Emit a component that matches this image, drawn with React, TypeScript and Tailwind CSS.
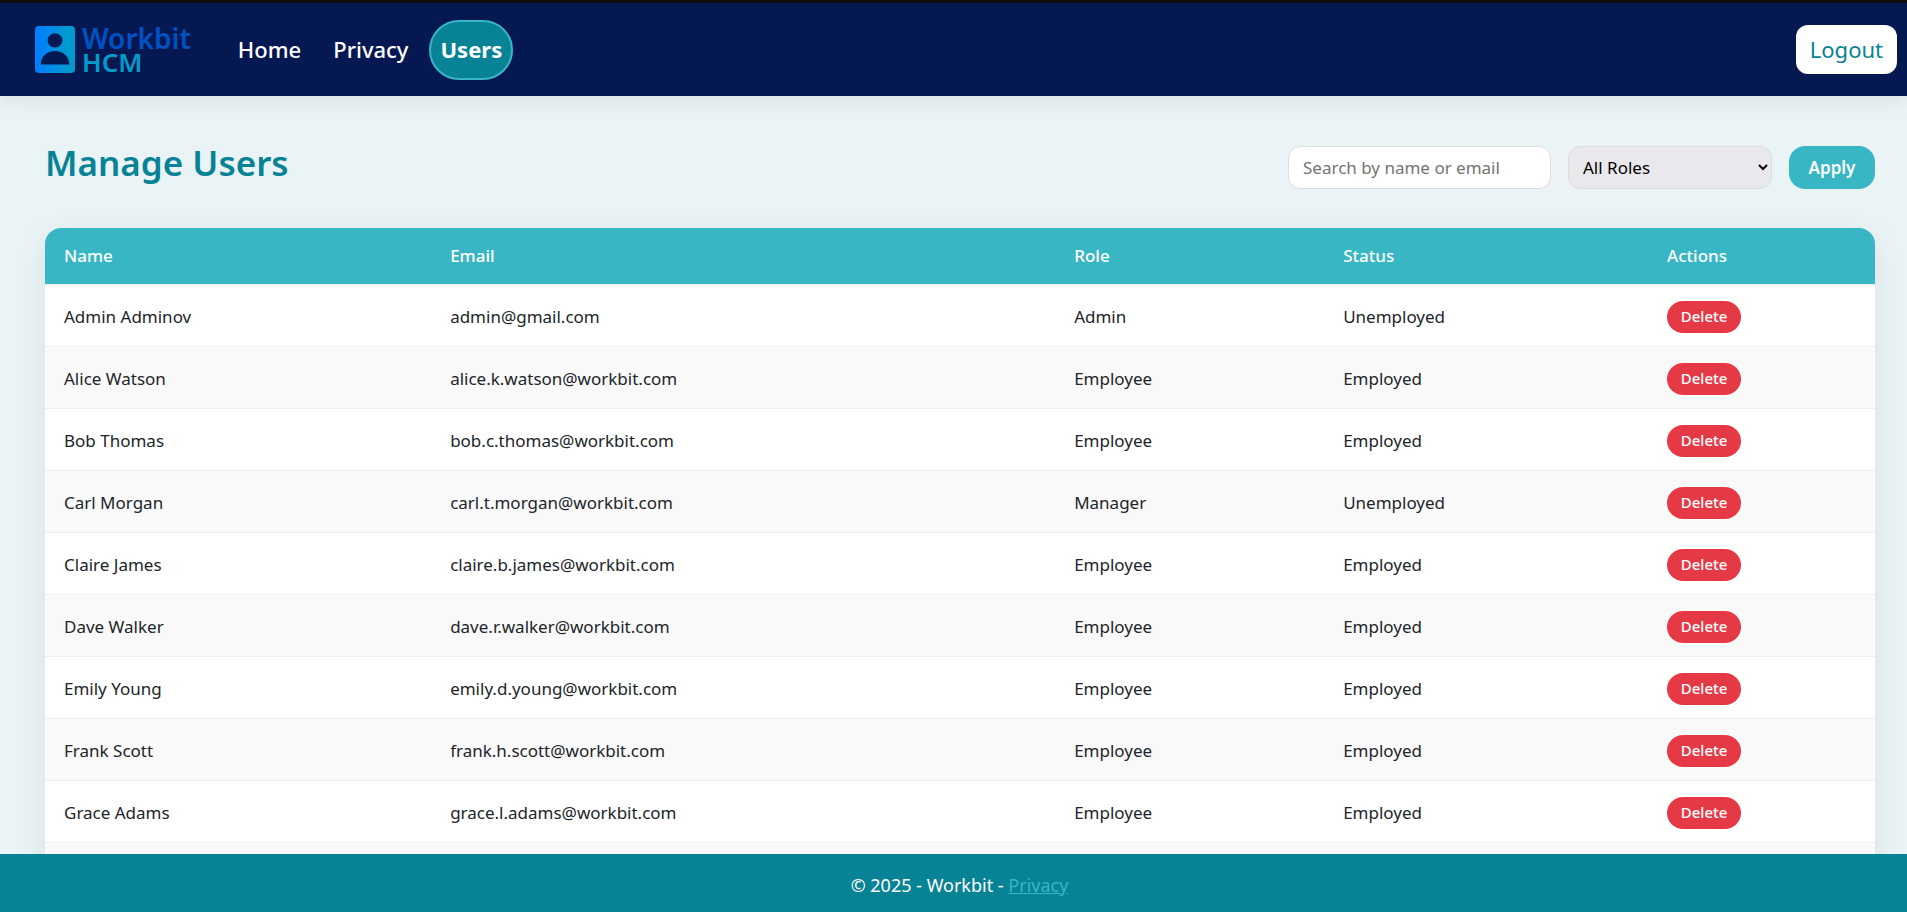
const users = [
  ['Admin Adminov', 'admin@gmail.com', 'Admin', 'Unemployed'],
  ['Alice Watson', 'alice.k.watson@workbit.com', 'Employee', 'Employed'],
  ['Bob Thomas', 'bob.c.thomas@workbit.com', 'Employee', 'Employed'],
  ['Carl Morgan', 'carl.t.morgan@workbit.com', 'Manager', 'Unemployed'],
  ['Claire James', 'claire.b.james@workbit.com', 'Employee', 'Employed'],
  ['Dave Walker', 'dave.r.walker@workbit.com', 'Employee', 'Employed'],
  ['Emily Young', 'emily.d.young@workbit.com', 'Employee', 'Employed'],
  ['Frank Scott', 'frank.h.scott@workbit.com', 'Employee', 'Employed'],
  ['Grace Adams', 'grace.l.adams@workbit.com', 'Employee', 'Employed'],
];

const columns = [
  { label: 'Name', width: 'w-[21.1%]' },
  { label: 'Email', width: 'w-[34.1%]' },
  { label: 'Role', width: 'w-[14.7%]' },
  { label: 'Status', width: 'w-[17.7%]' },
  { label: 'Actions', width: 'w-[12.4%]' },
];

function Logo() {
  return (
    <a href="#" aria-label="Workbit HCM" className="flex items-center gap-[7px]">
      <svg width="40" height="47" viewBox="0 0 38 47" preserveAspectRatio="none" aria-hidden="true">
        <defs>
          <linearGradient id="badge" x1="0" y1="0" x2="1" y2="0">
            <stop offset="0.1" stopColor="#0080fb" />
            <stop offset="0.8" stopColor="#0099d0" />
          </linearGradient>
        </defs>
        <path
          fill="url(#badge)"
          fillRule="evenodd"
          d="M4 0h30a4 4 0 0 1 4 4v39a4 4 0 0 1-4 4H4a4 4 0 0 1-4-4V4a4 4 0 0 1 4-4ZM19 7.200a7 7.200 0 1 0 0 14.400a7 7.200 0 1 0 0-14.400ZM5.500 38.500h27.200C32.700 31 27 25 19 25S5.500 31 5.500 38.500Z"
        />
      </svg>
      <span className="flex flex-col text-[28px] leading-6 font-semibold">
        <span className="text-[#0052c2]">Workbit</span>
        <span className="text-[26px] text-[#009dcc]">HCM</span>
      </span>
    </a>
  );
}

export default function App() {
  return (
    <div className="flex h-screen flex-col overflow-hidden bg-[#eaf4f7] font-['Noto_Sans','Open_Sans',sans-serif] text-[17px] text-[#212529]">
      <header className="relative flex h-24 shrink-0 items-center border-t-3 border-[#0d0d0d] bg-[#061852] pr-2.5 pl-[35px] shadow-[0_4px_20px_rgba(0,0,0,0.08)]">
        <Logo />
        <nav className="ml-9 flex items-center gap-2.5 text-[22px] font-medium text-white">
          <a href="#" className="px-[11px]">Home</a>
          <a href="#" className="px-[11px]">Privacy</a>
          <a href="#" className="flex h-[60px] items-center rounded-[30px] border-2 border-[#38b6c4] bg-[#088395] px-[9px] font-bold">
            Users
          </a>
        </nav>
        <button className="ml-auto h-[49px] rounded-xl bg-white px-3.5 text-[22px] text-[#088395]">
          Logout
        </button>
      </header>

      <main className="min-h-0 flex-1 overflow-hidden pr-8 pl-[45px] pt-[50px]">
        <div className="mb-[39px] flex h-[43px] items-center justify-between">
          <h1 className="pb-2.5 text-[35px] leading-[43px] font-semibold text-[#088395]">Manage Users</h1>
          <form className="flex h-full gap-[17px]" onSubmit={(e) => e.preventDefault()}>
            <input
              type="search"
              aria-label="Search by name or email"
              placeholder="Search by name or email"
              className="w-[263px] rounded-xl border border-[#dddddd] bg-white px-3.5 placeholder:text-[#757575]"
            />
            <select
              aria-label="Role"
              className="w-[204px] rounded-xl border border-[#dddddd] bg-[#e9e9ed] px-2.5 text-black"
            >
              <option>All Roles</option>
              <option>Admin</option>
              <option>Manager</option>
              <option>Employee</option>
            </select>
            <button className="w-[86px] rounded-2xl bg-[#38b6c4] font-semibold text-white">Apply</button>
          </form>
        </div>

        <div className="overflow-hidden rounded-2xl bg-white shadow-[0_8px_32px_rgba(0,0,0,0.08)]">
          <table className="w-full table-fixed border-collapse text-left">
            <thead className="bg-[#38b6c4] text-white">
              <tr className="h-14">
                {columns.map((c) => (
                  <th key={c.label} className={`${c.width} px-[19px] font-medium`}>{c.label}</th>
                ))}
              </tr>
            </thead>
            <tbody>
              {users.map((u) => (
                <tr key={u[1]} className="h-[62px] border-t border-[#eeeeee] even:bg-[#f9f9f9]">
                  {u.map((v, i) => (
                    <td key={i} className="px-[19px] pt-[3px]">{v}</td>
                  ))}
                  <td className="px-[19px] pt-[3px]">
                    <button className="block h-8 w-[74px] rounded-2xl bg-[#e63946] text-[15px] font-medium text-white">
                      Delete
                    </button>
                  </td>
                </tr>
              ))}
              <tr className="h-[62px] border-t border-[#eeeeee] even:bg-[#f9f9f9]">
                <td colSpan={5} />
              </tr>
            </tbody>
          </table>
        </div>
      </main>

      <footer className="relative flex h-[58px] shrink-0 items-center justify-center bg-[#088395] pt-1 pl-3 text-[18px] text-white">
        <p>
          © 2025 - Workbit - <a href="#" className="text-[#38b6c4] underline">Privacy</a>
        </p>
      </footer>
    </div>
  );
}
